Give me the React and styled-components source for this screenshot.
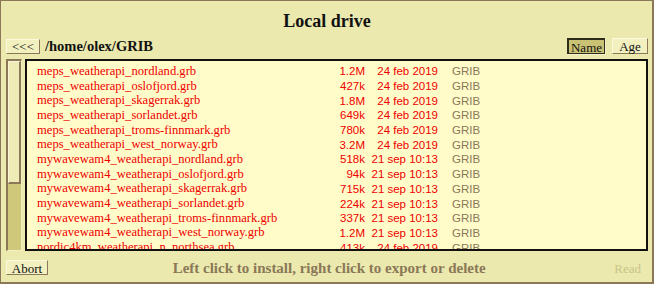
import React from "react";
import styled, { createGlobalStyle } from "styled-components";

const Global = createGlobalStyle`
  html, body { margin: 0; padding: 0; background: #ebe9ad; }
  * { box-sizing: border-box; }
`;

const Frame = styled.div`
  width: 654px;
  height: 284px;
  border: 1px solid #8a7858;
  border-right-width: 2px;
  border-bottom-width: 2px;
  background: #ebe9ad;
  display: flex;
  flex-direction: column;
  padding: 0 4px 0 5px;
  font-family: "Liberation Serif", "Times New Roman", serif;
`;

const Title = styled.div`
  height: 37px;
  display: flex;
  align-items: center;
  justify-content: center;
  font-weight: bold;
  font-size: 18px;
  color: #111;
  padding-top: 4px;
`;

const Toolbar = styled.div`
  height: 16px;
  display: flex;
  align-items: center;
  margin-bottom: 5px;
`;

const Button = styled.div`
  height: ${(p) => p.$h || 15}px;
  width: ${(p) => p.$w}px;
  display: flex;
  align-items: center;
  justify-content: center;
  font-size: 13px;
  color: #111;
  background: ${(p) => (p.$pressed ? "#c9c274" : "#f3f0c0")};
  border-style: solid;
  border-width: ${(p) => (p.$pressed ? "2px 1px 1px 2px" : "1px")};
  border-color: ${(p) =>
    p.$pressed
      ? "#2e2c1c #2e2c1c #2e2c1c #2e2c1c"
      : "#fbf9de #8a7858 #8a7858 #fbf9de"};
  box-shadow: ${(p) => (p.$pressed ? "1px 1px 0 #f6f3cc" : "none")};
  margin-left: ${(p) => p.$ml || 0}px;
  line-height: 1;
  padding-top: 1px;
`;

const Path = styled.div`
  font-weight: bold;
  font-size: 14.5px;
  margin-left: 5px;
  color: #111;
  flex: 1;
`;

const Main = styled.div`
  height: 192px;
  display: flex;
  gap: 3px;
`;

const Scrollbar = styled.div`
  width: 16px;
  height: 100%;
  background: #cfc87a;
  border-style: solid;
  border-width: 2px 1px 1px 2px;
  border-color: #8a7858 #f3f0c0 #f3f0c0 #8a7858;
  display: flex;
  flex-direction: column;
`;

const Thumb = styled.div`
  height: ${(p) => p.$h}px;
  background: #eeebb6;
  border-style: solid;
  border-width: 1px 2px 2px 1px;
  border-color: #f8f6d6 #8a7858 #8a7858 #f8f6d6;
`;

const List = styled.div`
  flex: 1;
  background: #fffcca;
  border: 2px solid #111;
  padding: 3px 0 0 10px;
  overflow: hidden;
`;

const Row = styled.div`
  height: 14.7px;
  display: flex;
  align-items: center;
  white-space: nowrap;
`;

const Name = styled.div`
  width: 288px;
  font-size: 12.6px;
  color: #ee0000;
  font-family: "Liberation Serif", "Times New Roman", serif;
`;

const Size = styled.div`
  width: 40px;
  text-align: right;
  font-size: 11.5px;
  color: #ee0000;
  font-family: "Liberation Sans", Arial, sans-serif;
`;

const DateCell = styled.div`
  width: 73px;
  text-align: right;
  font-size: 11.5px;
  color: #ee0000;
  font-family: "Liberation Sans", Arial, sans-serif;
`;

const Type = styled.div`
  padding-left: 14px;
  font-size: 11.5px;
  color: #8a7858;
  font-family: "Liberation Sans", Arial, sans-serif;
`;

const Footer = styled.div`
  flex: 1;
  display: grid;
  grid-template-columns: auto 1fr auto;
  align-items: center;
  padding-top: 2px;
`;

const Hint = styled.div`
  text-align: center;
  font-weight: bold;
  font-size: 15px;
  color: #8a7858;
  padding-top: 1px;
  padding-right: 4px;
`;

const Read = styled.div`
  font-size: 13px;
  color: #c9c48a;
  padding-right: 7px;
  padding-top: 2px;
`;

const files = [
  ["meps_weatherapi_nordland.grb", "1.2M", "24 feb 2019"],
  ["meps_weatherapi_oslofjord.grb", "427k", "24 feb 2019"],
  ["meps_weatherapi_skagerrak.grb", "1.8M", "24 feb 2019"],
  ["meps_weatherapi_sorlandet.grb", "649k", "24 feb 2019"],
  ["meps_weatherapi_troms-finnmark.grb", "780k", "24 feb 2019"],
  ["meps_weatherapi_west_norway.grb", "3.2M", "24 feb 2019"],
  ["mywavewam4_weatherapi_nordland.grb", "518k", "21 sep 10:13"],
  ["mywavewam4_weatherapi_oslofjord.grb", "94k", "21 sep 10:13"],
  ["mywavewam4_weatherapi_skagerrak.grb", "715k", "21 sep 10:13"],
  ["mywavewam4_weatherapi_sorlandet.grb", "224k", "21 sep 10:13"],
  ["mywavewam4_weatherapi_troms-finnmark.grb", "337k", "21 sep 10:13"],
  ["mywavewam4_weatherapi_west_norway.grb", "1.2M", "21 sep 10:13"],
  ["nordic4km_weatherapi_n_northsea.grb", "413k", "24 feb 2019"],
];

export default function App() {
  return (
    <>
      <Global />
      <Frame>
        <Title>Local drive</Title>
        <Toolbar>
          <Button $w={34}>&lt;&lt;&lt;</Button>
          <Path>/home/olex/GRIB</Path>
          <Button $w={38} $h={16} $pressed>Name</Button>
          <Button $w={36} $h={16} $ml={7}>Age</Button>
        </Toolbar>
        <Main>
          <Scrollbar>
            <Thumb $h={123} />
          </Scrollbar>
          <List>
            {files.map(([n, s, d]) => (
              <Row key={n}>
                <Name>{n}</Name>
                <Size>{s}</Size>
                <DateCell>{d}</DateCell>
                <Type>GRIB</Type>
              </Row>
            ))}
          </List>
        </Main>
        <Footer>
          <Button $w={42}>Abort</Button>
          <Hint>Left click to install, right click to export or delete</Hint>
          <Read>Read</Read>
        </Footer>
      </Frame>
    </>
  );
}
